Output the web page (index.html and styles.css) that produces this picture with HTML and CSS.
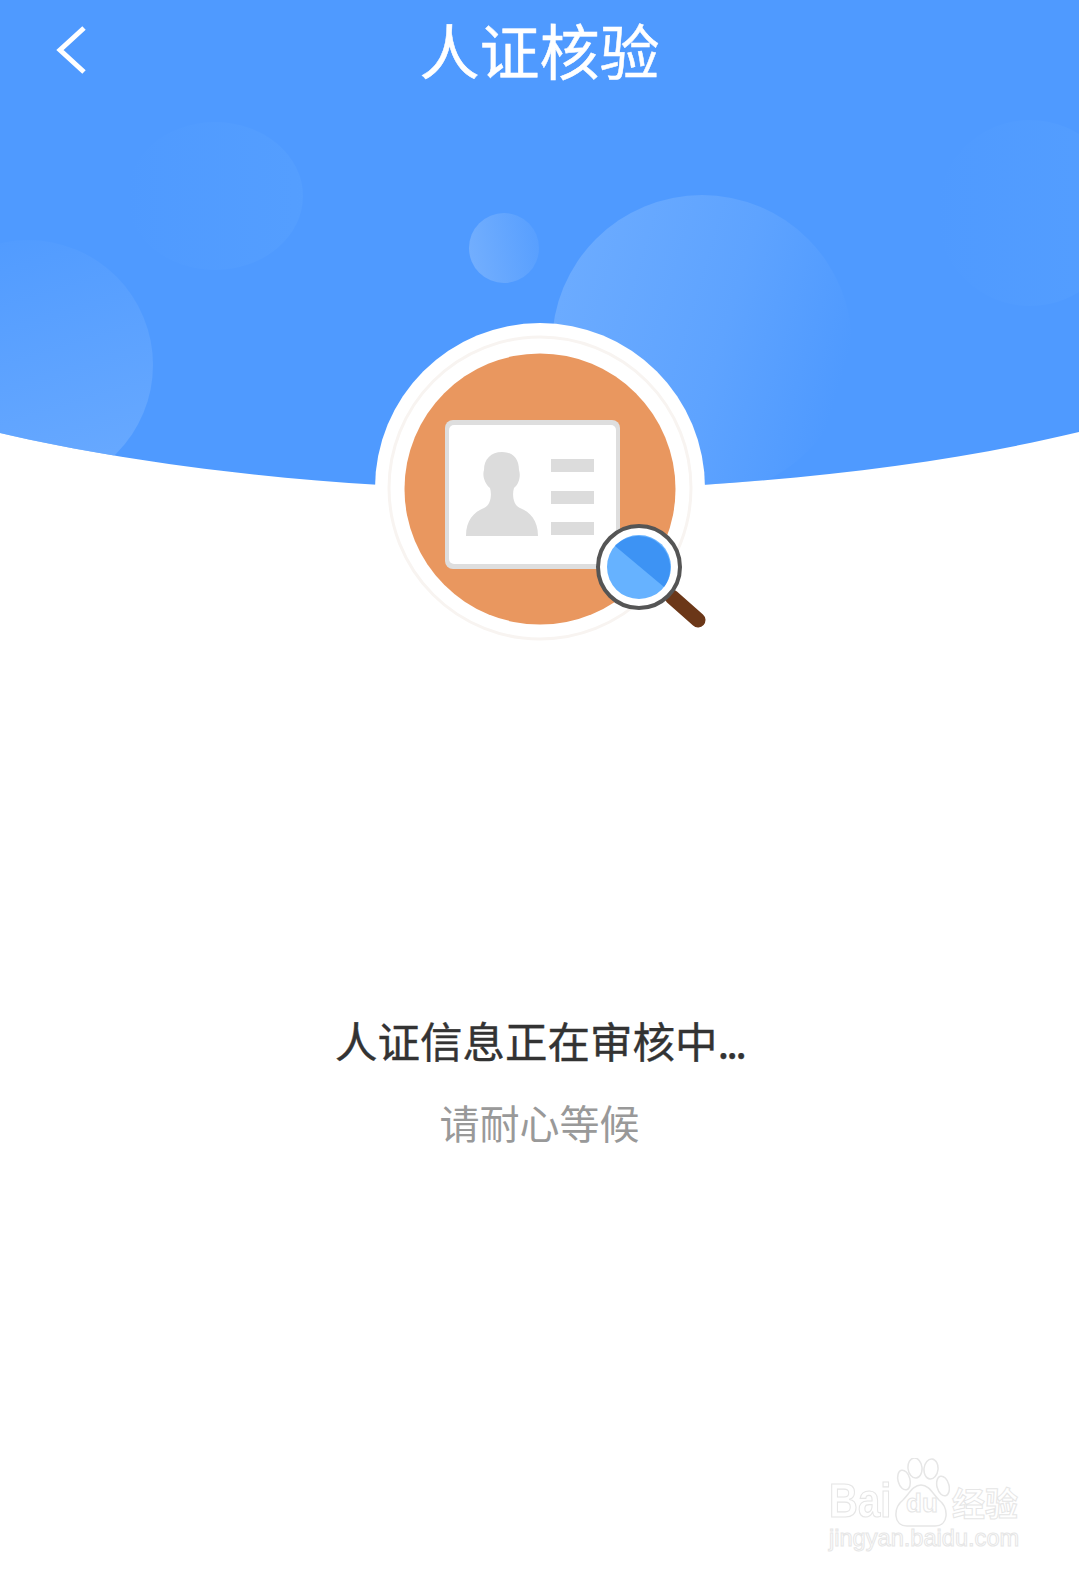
FILE: index.html
```html
<!DOCTYPE html>
<html lang="zh">
<head>
  <meta charset="UTF-8" />
  <title>人证核验</title>
  <link rel="stylesheet" href="styles.css">
</head>
<body>

<div class="pagina">
  <svg class="fondo" viewBox="0 0 1079 520" aria-hidden="true">
    <defs>
      <linearGradient id="burbuja" x1="0" y1="0.2" x2="1" y2="0.5">
        <stop offset="0" stop-color="#70aeff" stop-opacity="0.9" />
        <stop offset="0.6" stop-color="#70aeff" stop-opacity="0.45" />
        <stop offset="1" stop-color="#70aeff" stop-opacity="0" />
      </linearGradient>
      <linearGradient id="burbujaIzq" x1="0.3" y1="0" x2="0.6" y2="1">
        <stop offset="0" stop-color="#70aeff" stop-opacity="0.05" />
        <stop offset="1" stop-color="#70aeff" stop-opacity="0.75" />
      </linearGradient>
      <linearGradient id="burbujaChica" x1="0" y1="0.6" x2="1" y2="0.4">
        <stop offset="0" stop-color="#8abcfd" stop-opacity="0.6" />
        <stop offset="1" stop-color="#8abcfd" stop-opacity="0.15" />
      </linearGradient>
      <linearGradient id="burbujaTenue" x1="0" y1="0.5" x2="1" y2="0.5">
        <stop offset="0" stop-color="#5ea6ff" stop-opacity="0" />
        <stop offset="1" stop-color="#5ea6ff" stop-opacity="0.35" />
      </linearGradient>
      <clipPath id="curva">
        <path d="M0 433C150 468 350 490 540 490C730 490 930 468 1079 432V0H0Z" />
      </clipPath>
    </defs>
    <g clip-path="url(#curva)">
      <rect width="1079" height="520" fill="#4f9aff" />
      <ellipse cx="215" cy="196" rx="88" ry="74" fill="url(#burbujaTenue)" />
      <circle cx="1030" cy="213" r="93" fill="url(#burbujaTenue)" />
      <circle cx="504" cy="248" r="35" fill="url(#burbujaChica)" />
      <circle cx="702" cy="345" r="150" fill="url(#burbuja)" />
      <circle cx="28" cy="365" r="125" fill="url(#burbujaIzq)" />
    </g>
  </svg>

  <header class="barra">
    <svg class="volver" viewBox="0 0 34 50" aria-label="返回">
      <path d="M29 3L5 25L29 47" fill="none" stroke="#fff" stroke-width="5" />
    </svg>
    <h1 class="titulo">人证核验</h1>
  </header>

  <svg class="insignia" viewBox="360 310 360 340" aria-hidden="true">
    <circle cx="540" cy="488" r="165" fill="#fff" />
    <circle cx="540" cy="488" r="151" fill="none" stroke="#f8f4f1" stroke-width="3" />
    <circle cx="540" cy="489" r="135.500" fill="#e9975f" />
    <rect x="445" y="420" width="175" height="149" rx="8" fill="#dedede" />
    <rect x="449" y="425" width="167" height="139" rx="5" fill="#fff" />
    <path d="M502 452C513 452 519 459 519 470C521 476 519 484 514 488C512 494 513 505 520 508C530 512 538 520 538 536H466C466 520 474 512 484 508C491 505 492 494 490 488C485 484 482 476 484 470C484 459 491 452 502 452Z" fill="#dcdcdc" />
    <rect x="551" y="459" width="43" height="13" fill="#dcdcdc" />
    <rect x="551" y="491" width="43" height="13" fill="#dcdcdc" />
    <rect x="551" y="522" width="43" height="13" fill="#dcdcdc" />
    <path d="M672 597L698 620" stroke="#6b3718" stroke-width="15" stroke-linecap="round" />
    <circle cx="639" cy="567" r="41" fill="#fff" stroke="#555" stroke-width="4" />
    <circle cx="639" cy="567" r="32" fill="#66b2ff" />
    <path d="M615 546A32 32 0 0 1 664 587Z" fill="#3d93f4" />
  </svg>

  <section class="mensaje">
    <p class="estado">人证信息正在审核中<span class="puntos">...</span></p>
    <p class="espera">请耐心等候</p>
  </section>

  <div class="marca">
    <div class="marca-logo">
      <span class="marca-bai">Bai</span>
      <span class="marca-pata">
        <svg viewBox="0 0 57 69" aria-hidden="true">
          <ellipse cx="11" cy="22" rx="6" ry="10" transform="rotate(-15 11 22)" />
          <ellipse cx="22" cy="10" rx="7" ry="10" transform="rotate(-6 22 10)" />
          <ellipse cx="38" cy="11" rx="7" ry="10" transform="rotate(6 38 11)" />
          <ellipse cx="50" cy="28" rx="6" ry="10" transform="rotate(-15 50 28)" />
          <path d="M28 27C36 27 40 36 46 42C56 50 56 68 42 68H14C0 68 0 50 10 42C16 36 20 27 28 27Z" />
        </svg>
        <span class="marca-du">du</span>
      </span>
      <span class="marca-cn">经验</span>
    </div>
    <div class="marca-url">jingyan.baidu.com</div>
  </div>
</div>

</body>
</html>
```

FILE: styles.css
```css
body {
  margin: 0;
  background: #fff;
  font-family: "Noto Sans CJK SC", "Noto Sans", sans-serif;
}

.pagina {
  position: relative;
  width: 1079px;
  height: 1573px;
  overflow: hidden;
}

.fondo {
  position: absolute;
  top: 0;
  left: 0;
  width: 1079px;
  height: 520px;
}

.barra {
  position: relative;
  height: 100px;
  display: flex;
  align-items: center;
  justify-content: center;
}

.volver {
  position: absolute;
  left: 55px;
  top: 25px;
  width: 34px;
  height: 50px;
}

.titulo {
  margin: -3px 0 0;
  color: #fff;
  font-size: 60px;
  font-weight: 400;
  line-height: 100px;
  -webkit-text-stroke: 0.5px #fff;
}

.insignia {
  position: relative;
  display: block;
  width: 360px;
  height: 340px;
  margin: 210px 0 0 360px;
  filter: blur(0.6px);
}

.mensaje {
  position: relative;
  margin-top: 360px;
  text-align: center;
}

.estado {
  margin: 0;
  color: #333;
  font-size: 42.500px;
  font-weight: 400;
  line-height: 60px;
  -webkit-text-stroke: 0.4px #333;
}

.puntos {
  letter-spacing: -3px;
}

.espera {
  margin: 22px 0 0;
  color: #999;
  font-size: 40px;
  line-height: 60px;
}

/* marca de agua */
.marca {
  position: absolute;
  left: 829px;
  top: 1458px;
  width: 195px;
  color: #fff;
}

.marca-logo {
  display: flex;
  align-items: flex-end;
  height: 69px;
}

.marca-bai,
.marca-cn,
.marca-url,
.marca-du {
  -webkit-text-stroke: 1px #e6e6e6;
  font-family: "Liberation Sans", sans-serif;
  font-weight: 700;
}

.marca-bai {
  width: 64px;
  margin-bottom: 9px;
  font-size: 40px;
  line-height: 36px;
  transform: scaleY(1.2);
}

.marca-pata {
  position: relative;
  width: 57px;
  height: 69px;
}

.marca-pata svg {
  display: block;
  width: 57px;
  height: 69px;
  fill: #fff;
  stroke: #e6e6e6;
  stroke-width: 1.5;
}

.marca-du {
  position: absolute;
  left: 13px;
  bottom: 11px;
  font-size: 26px;
  line-height: 26px;
}

.marca-cn {
  margin: 0 0 5px 2px;
  font-family: "Noto Sans CJK SC", sans-serif;
  font-size: 33px;
  line-height: 40px;
}

.marca-url {
  margin-top: -2px;
  font-size: 23.600px;
  font-weight: 400;
  line-height: 26px;
  white-space: nowrap;
}
```
